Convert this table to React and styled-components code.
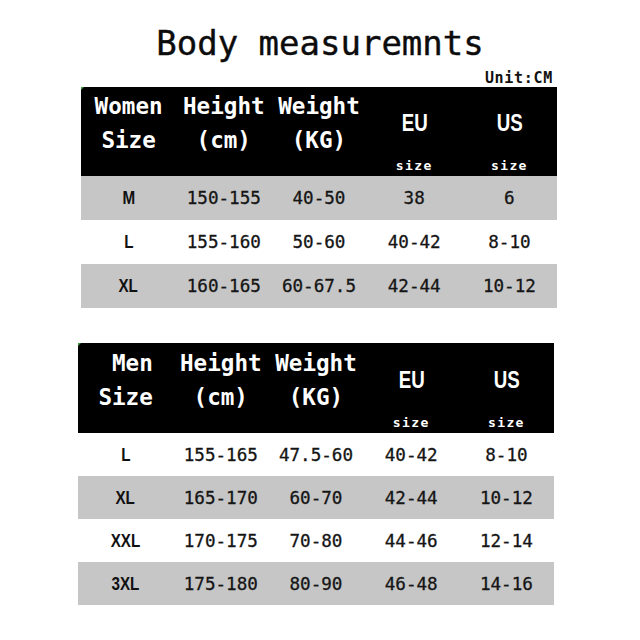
import React from "react";
import styled, { createGlobalStyle } from "styled-components";

const GlobalStyle = createGlobalStyle`
  html, body {
    margin: 0;
    padding: 0;
    background: #ffffff;
  }
  body {
    font-family: "DejaVu Sans Mono", "Liberation Mono", monospace;
    color: #111111;
  }
`;

const Page = styled.div`
  width: 640px;
  height: 640px;
  display: flex;
  flex-direction: column;
  padding-top: 23px;
  box-sizing: border-box;
`;

const Title = styled.h1`
  margin: 0;
  font-family: "DejaVu Sans Mono", monospace;
  font-weight: normal;
  font-size: 34px;
  line-height: 40px;
  text-align: center;
  color: #0c0c0c;
  -webkit-text-stroke: 0.4px #0c0c0c;
`;

const Unit = styled.div`
  margin: 7px 87px 0 0;
  align-self: flex-end;
  font-family: "DejaVu Sans Mono", monospace;
  font-weight: bold;
  font-size: 15px;
  letter-spacing: 0.7px;
  line-height: 17px;
`;

const Table = styled.div`
  position: relative;
  width: 476px;
  margin-left: ${(p) => p.$left}px;
  margin-top: ${(p) => p.$top}px;
  display: flex;
  flex-direction: column;

  &::before {
    content: "";
    position: absolute;
    left: 0;
    top: 0;
    border-top: 3px solid #3c9a3c;
    border-right: 3px solid transparent;
  }
`;

const Head = styled.div`
  display: grid;
  grid-template-columns: repeat(5, 1fr);
  height: ${(p) => p.$h}px;
  background: #000000;
  color: #ffffff;
`;

const HeadCell = styled.div`
  display: grid;
  grid-template-rows: 1fr 17px;
  justify-items: center;
  align-items: center;
`;

const HeadLabel = styled.div`
  font-family: "DejaVu Sans Mono", monospace;
  font-weight: bold;
  font-size: 22.6px;
  line-height: 34px;
  text-align: center;
  white-space: pre;
`;

const ShoeLabel = styled.div`
  display: inline-block;
  font-family: "Liberation Sans", Arial, sans-serif;
  font-weight: bold;
  font-size: 24px;
  line-height: 30px;
  transform: scaleX(0.78);
`;

const SizeNote = styled.div`
  align-self: start;
  font-family: "DejaVu Sans Mono", monospace;
  font-weight: bold;
  font-size: 13px;
  letter-spacing: 1.4px;
  line-height: 14px;
`;

const Row = styled.div`
  display: grid;
  grid-template-columns: repeat(5, 1fr);
  height: ${(p) => p.$h}px;
  background: ${(p) => (p.$shade ? "#c6c6c6" : "#ffffff")};
  align-items: center;
  justify-items: center;
`;

const SizeCell = styled.div`
  display: inline-block;
  font-family: "Liberation Sans", Arial, sans-serif;
  font-weight: bold;
  font-size: 19px;
  color: #111111;
  transform: scaleX(0.8);
`;

const Cell = styled.div`
  font-family: "DejaVu Sans Mono", monospace;
  font-size: 17.6px;
  color: #151515;
  -webkit-text-stroke: 0.3px #151515;
`;

const women = [
  ["M", "150-155", "40-50", "38", "6"],
  ["L", "155-160", "50-60", "40-42", "8-10"],
  ["XL", "160-165", "60-67.5", "42-44", "10-12"],
];

const men = [
  ["L", "155-165", "47.5-60", "40-42", "8-10"],
  ["XL", "165-170", "60-70", "42-44", "10-12"],
  ["XXL", "170-175", "70-80", "44-46", "12-14"],
  ["3XL", "175-180", "80-90", "46-48", "14-16"],
];

function SizeTable({ who, rows, left, top, headH, rowH, shadeFirst }) {
  return (
    <Table $left={left} $top={top}>
      <Head $h={headH}>
        <HeadCell>
          <HeadLabel>{`${who}\nSize`}</HeadLabel>
        </HeadCell>
        <HeadCell>
          <HeadLabel>{"Height\n(cm)"}</HeadLabel>
        </HeadCell>
        <HeadCell>
          <HeadLabel>{"Weight\n(KG)"}</HeadLabel>
        </HeadCell>
        <HeadCell>
          <ShoeLabel>EU</ShoeLabel>
          <SizeNote>size</SizeNote>
        </HeadCell>
        <HeadCell>
          <ShoeLabel>US</ShoeLabel>
          <SizeNote>size</SizeNote>
        </HeadCell>
      </Head>
      {rows.map((r, i) => (
        <Row key={r[0]} $h={rowH} $shade={(i % 2 === 0) === shadeFirst}>
          <SizeCell>{r[0]}</SizeCell>
          {r.slice(1).map((v, j) => (
            <Cell key={j}>{v}</Cell>
          ))}
        </Row>
      ))}
    </Table>
  );
}

export default function App() {
  return (
    <>
      <GlobalStyle />
      <Page>
        <Title>Body measuremnts</Title>
        <Unit>Unit:CM</Unit>
        <SizeTable
          who="Women"
          rows={women}
          left={81}
          top={0}
          headH={89}
          rowH={44}
          shadeFirst={true}
        />
        <SizeTable
          who=" Men"
          rows={men}
          left={78}
          top={35}
          headH={90}
          rowH={43}
          shadeFirst={false}
        />
      </Page>
    </>
  );
}
